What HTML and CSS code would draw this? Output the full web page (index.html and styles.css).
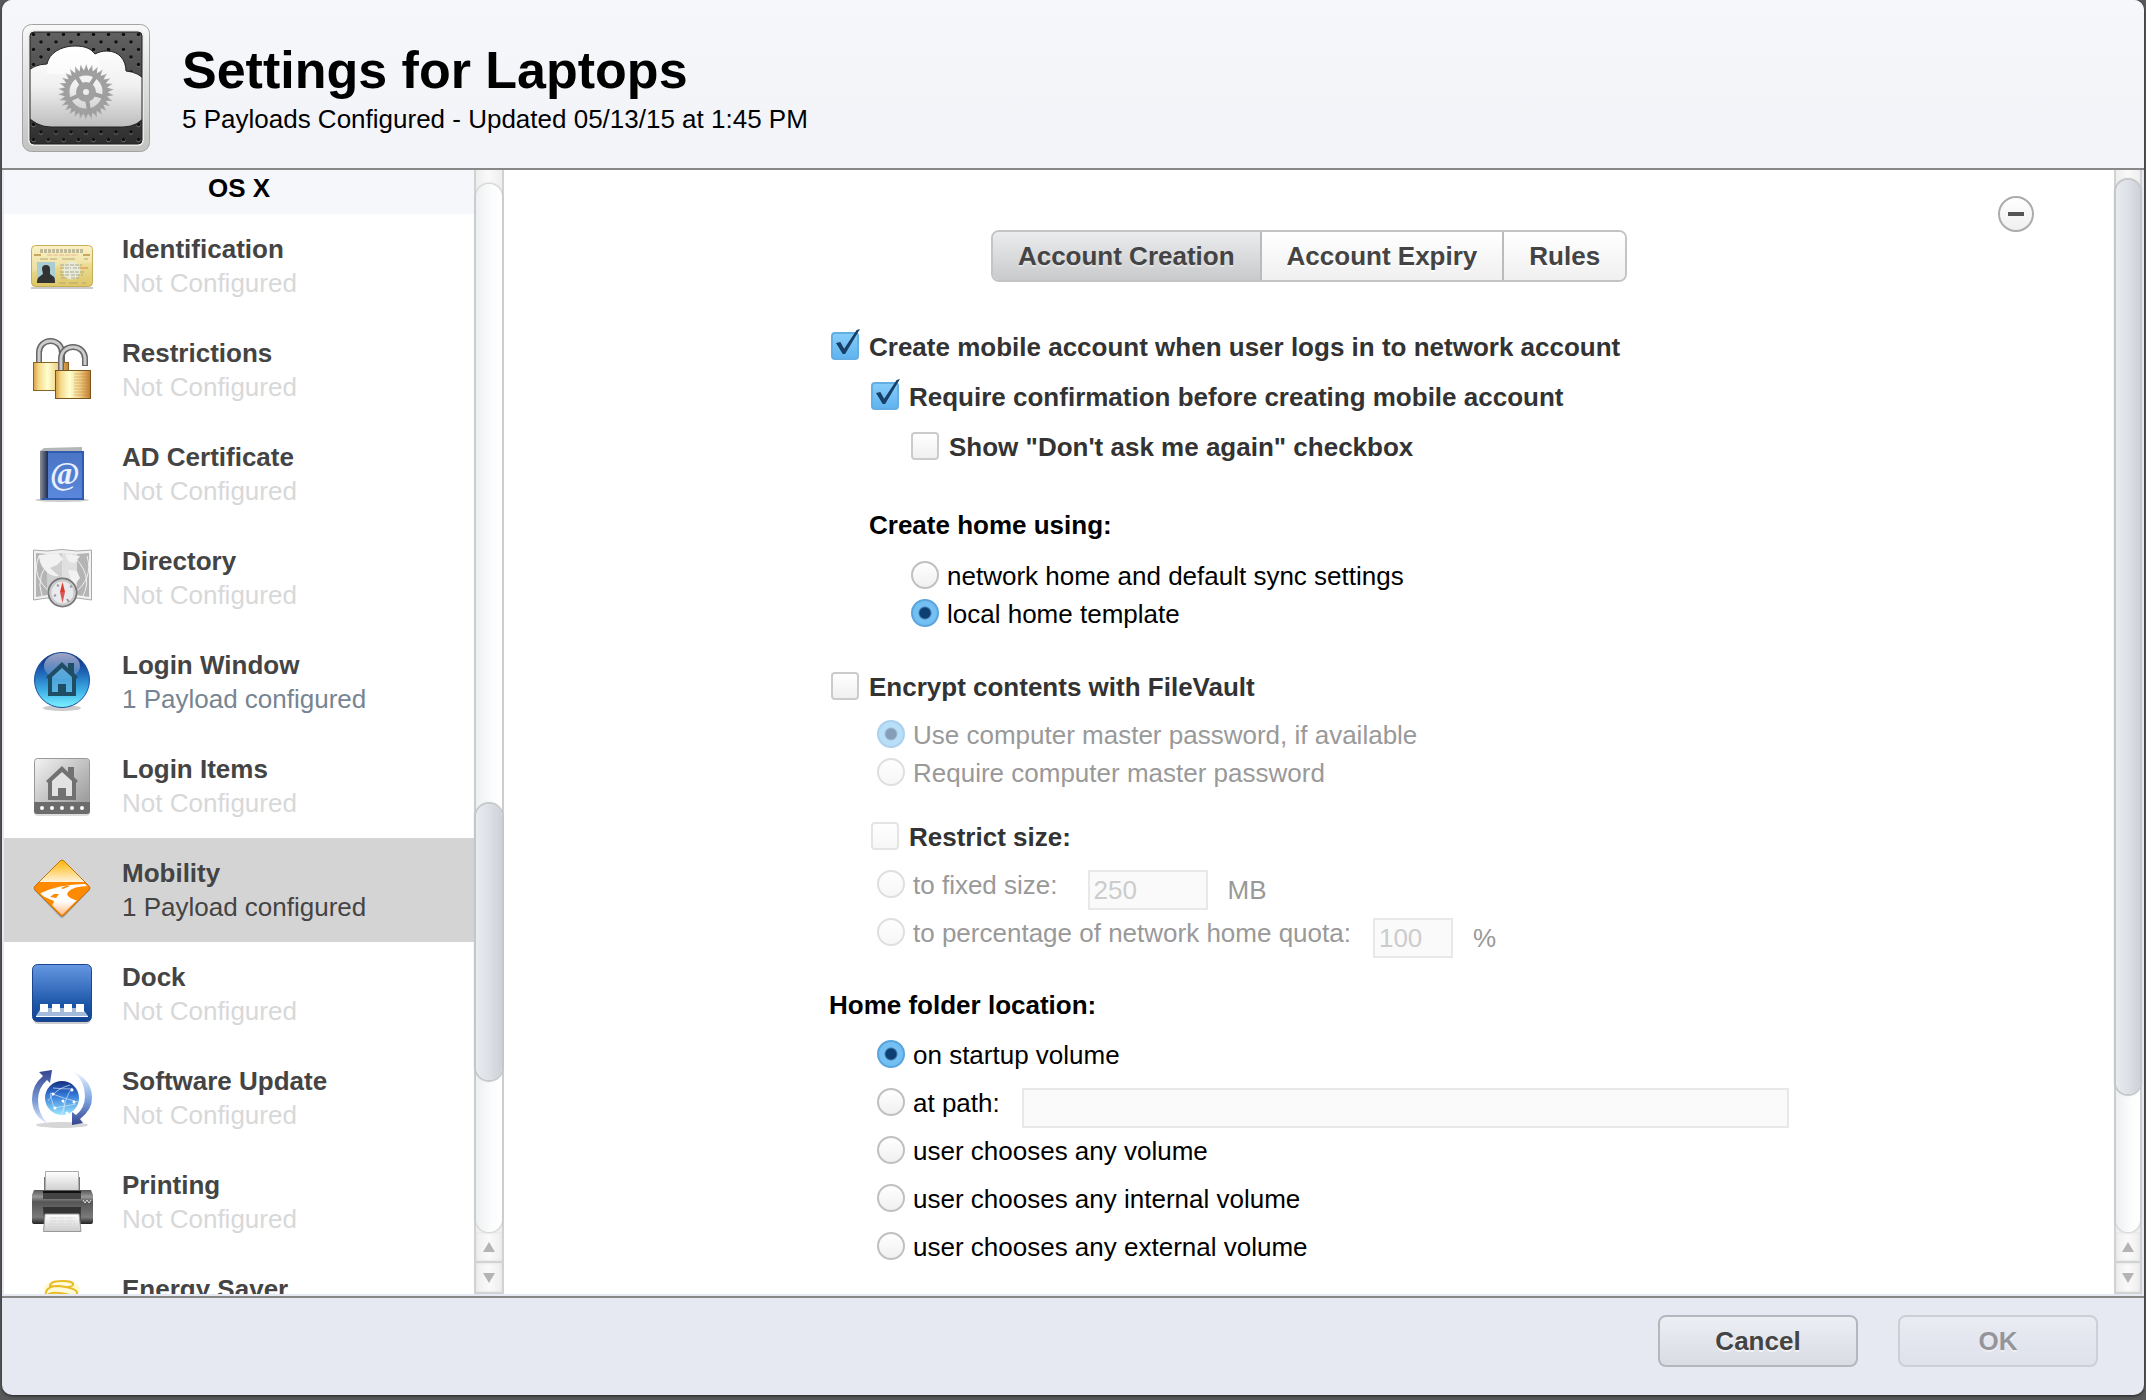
FILE: index.html
```html
<!DOCTYPE html>
<html lang="en">
<head>
    <meta charset="UTF-8">
    <meta name="viewport" content="width=device-width, initial-scale=1.0">
    <title>Settings for Laptops</title>
    <link rel="stylesheet" href="styles.css">
</head>
<body>
    <div class="window">
        <header class="header">
            <svg class="header-icon" viewBox="0 0 128 128" aria-hidden="true">
                <defs>
                    <linearGradient id="frame" x1="0" y1="0" x2="0" y2="1"><stop offset="0" stop-color="#f8f8f8"/><stop offset="1" stop-color="#c2c2c0"/></linearGradient>
                    <linearGradient id="mesh" x1="0" y1="0" x2="0" y2="1"><stop offset="0" stop-color="#616161"/><stop offset="1" stop-color="#2e2e2e"/></linearGradient>
                    <linearGradient id="cloud" x1="0" y1="0" x2="0" y2="1"><stop offset="0" stop-color="#fff"/><stop offset="0.5" stop-color="#f0f0f0"/><stop offset="1" stop-color="#bdbdbd"/></linearGradient>
                    <linearGradient id="cog" x1="0" y1="0" x2="0" y2="1"><stop offset="0" stop-color="#b5b5b5"/><stop offset="1" stop-color="#8f8f8f"/></linearGradient>
                    <pattern id="holes" x="4" y="3" width="15" height="15" patternUnits="userSpaceOnUse">
                        <circle cx="7.5" cy="8.2" r="2" fill="#6a6a6a"/><circle cx="7.5" cy="7.5" r="1.8" fill="#111"/>
                        <circle cx="0" cy="0.7" r="2" fill="#6a6a6a"/><circle cx="0" cy="0" r="1.8" fill="#111"/>
                        <circle cx="15" cy="0.7" r="2" fill="#6a6a6a"/><circle cx="15" cy="0" r="1.8" fill="#111"/>
                        <circle cx="0" cy="15" r="1.8" fill="#111"/><circle cx="15" cy="15" r="1.8" fill="#111"/>
                    </pattern>
                    <clipPath id="inner"><rect x="8" y="8" width="112" height="112" rx="4"/></clipPath>
                    <g id="teeth">
                        <path id="tooth" d="M61 49L64.400 40L67 49z"/>
                        <use href="#tooth" transform="rotate(12 64 68)"/>
                        <use href="#tooth" transform="rotate(24 64 68)"/>
                        <use href="#tooth" transform="rotate(36 64 68)"/>
                        <use href="#tooth" transform="rotate(48 64 68)"/>
                    </g>
                </defs>
                <rect x="0.5" y="0.5" width="127" height="127" rx="9" fill="url(#frame)" stroke="#a3a3a3"/>
                <rect x="6" y="6" width="116" height="116" rx="6" fill="#e9e9e9"/>
                <g clip-path="url(#inner)">
                    <rect x="8" y="8" width="112" height="112" fill="url(#mesh)"/>
                    <rect x="8" y="8" width="112" height="112" fill="url(#holes)"/>
                    <path d="M2 50Q12 40 25 40C27 29 39 22 53 22C64 22 69 25 73 30C77 28 80 27 85 27C97 27 104 36 104 47Q117 48 125 58V90Q116 103 101 103H29Q14 103 3 90z" fill="url(#cloud)" stroke="#222" stroke-width="1"/>
                    <path d="M25 50C25 35 34 24 51 23S77 32 80 50" fill="#fff" opacity="0.6"/>
                    <g fill="url(#cog)">
                        <use href="#teeth"/>
                        <use href="#teeth" transform="rotate(60 64 68)"/>
                        <use href="#teeth" transform="rotate(120 64 68)"/>
                        <use href="#teeth" transform="rotate(180 64 68)"/>
                        <use href="#teeth" transform="rotate(240 64 68)"/>
                        <use href="#teeth" transform="rotate(300 64 68)"/>
                    </g>
                    <circle cx="64" cy="68" r="19" fill="none" stroke="#a0a0a0" stroke-width="5"/>
                    <path d="M64 68L67 87M64 68l18 5M64 68L47 76M64 68L54 52M64 68l10-16" stroke="#9d9d9d" stroke-width="4"/>
                    <circle cx="64" cy="68" r="10" fill="#a0a0a0"/>
                    <circle cx="64" cy="68" r="3" fill="#eee"/>
                </g>
                <rect x="8" y="8" width="112" height="112" rx="4" fill="none" stroke="#222" stroke-width="1"/>
            </svg>
            <div>
                <h1>Settings for Laptops</h1>
                <p>5 Payloads Configured - Updated 05/13/15 at 1:45 PM</p>
            </div>
        </header>

        <div class="body">
            <nav class="sidebar">
                <h2>OS X</h2>

                <a class="item" href="#identification">
                    <svg class="item-icon" viewBox="0 0 64 64" aria-hidden="true">
                        <defs><linearGradient id="card" x1="0" y1="0" x2="0" y2="1"><stop offset="0" stop-color="#faefb8"/><stop offset="1" stop-color="#dcc666"/></linearGradient></defs>
                        <path d="M1 56h62" stroke="#999" stroke-width="2" opacity="0.5"/>
                        <rect x="1.500" y="13.500" width="61" height="41" rx="4" fill="url(#card)" stroke="#c9ae58"/>
                        <path d="M2 40Q30 32 62 31V18Q62 14 58 14H6Q2 14 2 18z" fill="#fff" opacity="0.2"/>
                        <path d="M10 19h44" stroke="#c2bb9a" stroke-width="4" stroke-dasharray="3 1"/>
                        <path d="M4 23h7M53 23h7" stroke="#c8a860" stroke-width="2"/>
                        <path d="M17 23h31" stroke="#e8b48c" stroke-width="1" stroke-dasharray="5 1"/>
                        <path d="M10 27h8M20 27h7M32 27h13M54 27h4M29 51h7M39 51h9M52 51h4" stroke="#b3a673" stroke-width="1"/>
                        <rect x="7" y="30" width="18" height="21" fill="#a9cdd0"/>
                        <path d="M12 37Q12 33 16 33T20 37V42L24 45Q25 46 25 51H7Q7 46 9 45L13 42z" fill="#333"/>
                        <circle cx="41.500" cy="38.500" r="9" fill="#e8eadc"/>
                        <path d="M30 33h22M30 36h11M43 36h7M30 40h24M30 43h9M41 43h12M31 46h6M41 46h8" stroke="#aaa68a" stroke-width="1" stroke-dasharray="4 1"/>
                        <path d="M50 36h8" stroke="#e08058" stroke-width="1"/>
                    </svg>
                    <span class="item-text"><strong>Identification</strong><small>Not Configured</small></span>
                </a>

                <a class="item" href="#restrictions">
                    <svg class="item-icon" viewBox="0 0 64 64" aria-hidden="true">
                        <defs><linearGradient id="brass"><stop offset="0" stop-color="#d99f44"/><stop offset="0.15" stop-color="#f5d98a"/><stop offset="0.4" stop-color="#ffffd0"/><stop offset="0.7" stop-color="#f0cf86"/><stop offset="1" stop-color="#c47d2c"/></linearGradient></defs>
                        <path d="M9 28V17C9 1 32 1 32 17V28" fill="none" stroke="#666" stroke-width="6"/>
                        <path d="M9 28V17C9 1 32 1 32 17V28" fill="none" stroke="#ccc" stroke-width="3"/>
                        <rect x="3.500" y="26.500" width="35" height="28" fill="url(#brass)" stroke="#8a6426"/>
                        <path d="M31 35V23C31 7 55 7 55 23V30" fill="none" stroke="#666" stroke-width="6"/>
                        <path d="M31 35V23C31 7 55 7 55 23V29" fill="none" stroke="#ccc" stroke-width="3"/>
                        <rect x="25.500" y="34.500" width="35" height="28" fill="url(#brass)" stroke="#7a551e"/>
                        <path d="M44 38h16M44 41h16M44 44h16M44 47h16M44 50h16M44 53h16M44 56h16M44 59h16" stroke="#b06f2a" opacity="0.35"/>
                    </svg>
                    <span class="item-text"><strong>Restrictions</strong><small>Not Configured</small></span>
                </a>

                <a class="item" href="#ad-certificate">
                    <svg class="item-icon" viewBox="0 0 64 64" aria-hidden="true">
                        <defs>
                            <linearGradient id="cover" x1="0" y1="0" x2="0" y2="1"><stop offset="0" stop-color="#4a74c4"/><stop offset="1" stop-color="#5b88de"/></linearGradient>
                            <linearGradient id="spine"><stop offset="0" stop-color="#8b8f96"/><stop offset="1" stop-color="#1b2b52"/></linearGradient>
                        </defs>
                        <ellipse cx="32" cy="60" rx="27" ry="2" fill="#aaa" opacity="0.6"/>
                        <path d="M10 11L14 8L52 7V12H10z" fill="#b4b7b8"/>
                        <rect x="10" y="11" width="44" height="49" fill="url(#cover)"/>
                        <rect x="10" y="11" width="8" height="49" fill="url(#spine)"/>
                        <path d="M18 12H53V59H12" fill="none" stroke="#2f5bb0" stroke-width="2"/>
                        <text x="35" y="44" text-anchor="middle" class="at-sign">@</text>
                    </svg>
                    <span class="item-text"><strong>AD Certificate</strong><small>Not Configured</small></span>
                </a>

                <a class="item" href="#directory">
                    <svg class="item-icon" viewBox="0 0 64 64" aria-hidden="true">
                        <path d="M3.500 6L17 7L32 5.500L47 7L61.500 6V56L47 54L32 56L17 54L3.500 56z" fill="#f1f1f1" stroke="#aaa"/>
                        <path d="M6 9L17 10V51L6 53z" fill="#b4b4b4"/>
                        <path d="M17 10L32 9V52L17 51z" fill="#cfcfcf"/>
                        <path d="M32 9L47 10V51L32 52z" fill="#e0e0e0"/>
                        <path d="M47 10L59 9V53L47 51z" fill="#b4b4b4"/>
                        <path d="M9 11L28 9L33 15L27 21L20 24L29 32Q20 33 15 26Q9 20 9 11zM35 10L50 12L45 19L39 18zM38 26L47 27L50 34L43 43z" fill="#f2f2f2"/>
                        <path d="M9 12Q0 32 22 50M57 12Q64 35 43 50M12 52Q4 30 26 10M41 10Q64 30 53 52" fill="none" stroke="#f1f1f1"/>
                        <circle cx="32.500" cy="48.500" r="14" fill="#e9eaee" stroke="#777" stroke-width="2"/>
                        <circle cx="32.500" cy="48.500" r="12" fill="none" stroke="#c9c9c9" stroke-width="2"/>
                        <path d="M30 48l2.500-10L35 48z" fill="#e03a2a"/>
                        <path d="M30 48l2.500 11L35 48z" fill="#d55"/>
                        <path d="M24 52l2-1M40 43l2-1M27 41l2 1M37 55l2 3" stroke="#999" stroke-width="2"/>
                    </svg>
                    <span class="item-text"><strong>Directory</strong><small>Not Configured</small></span>
                </a>

                <a class="item configured" href="#login-window">
                    <svg class="item-icon" viewBox="0 0 64 64" aria-hidden="true">
                        <defs>
                            <linearGradient id="orb" x1="0" y1="0" x2="0" y2="1"><stop offset="0" stop-color="#10206e"/><stop offset="0.35" stop-color="#1d63b5"/><stop offset="0.7" stop-color="#3fb2e8"/><stop offset="1" stop-color="#7df3ff"/></linearGradient>
                            <linearGradient id="gloss" x1="0" y1="0" x2="0" y2="1"><stop offset="0" stop-color="#fff" stop-opacity="0.6"/><stop offset="1" stop-color="#fff" stop-opacity="0.1"/></linearGradient>
                            <path id="house" fill-rule="evenodd" d="M32 14L38 20V15H44V25L48 29L46 31V48H18V31L16 29zM32 20L22 29V44H28V36H36V44H42V29z"/>
                        </defs>
                        <ellipse cx="32" cy="60" rx="19" ry="3" fill="#999" opacity="0.5"/>
                        <circle cx="32" cy="32" r="27.500" fill="url(#orb)" stroke="#1a4fa0"/>
                        <ellipse cx="32" cy="18" rx="18" ry="13" fill="url(#gloss)"/>
                        <path d="M32 19L21 29V45H43V29z" fill="#5fb4e2" opacity="0.7"/>
                        <use href="#house" fill="#1f4d63"/>
                    </svg>
                    <span class="item-text"><strong>Login Window</strong><small>1 Payload configured</small></span>
                </a>

                <a class="item" href="#login-items">
                    <svg class="item-icon" viewBox="0 0 64 64" aria-hidden="true">
                        <defs><linearGradient id="silver" x1="0" y1="0" x2="1" y2="1"><stop offset="0" stop-color="#f4f4f4"/><stop offset="1" stop-color="#8f8f8f"/></linearGradient></defs>
                        <rect x="4" y="8" width="56" height="56" rx="4" fill="#bbb" opacity="0.5"/>
                        <rect x="4.500" y="6.500" width="55" height="55" rx="3" fill="url(#silver)" stroke="#999"/>
                        <path d="M4 50H60V59Q60 62 57 62H7Q4 62 4 59z" fill="#6c6c6c"/>
                        <path d="M12 56h41" stroke="#fff" stroke-width="4" stroke-linecap="round" stroke-dasharray="0 10"/>
                        <path d="M32 19L21 29V45H43V29z" fill="#e2e2e2"/>
                        <use href="#house" fill="#717171"/>
                    </svg>
                    <span class="item-text"><strong>Login Items</strong><small>Not Configured</small></span>
                </a>

                <a class="item configured selected" href="#mobility">
                    <svg class="item-icon" viewBox="0 0 64 64" aria-hidden="true">
                        <defs>
                            <linearGradient id="sky" x1="0" y1="0" x2="0" y2="1"><stop offset="0" stop-color="#ffb400"/><stop offset="0.39" stop-color="#fff3dd"/><stop offset="0.4" stop-color="#ff8a00"/><stop offset="1" stop-color="#ff8a00"/></linearGradient>
                            <linearGradient id="road" x1="0" y1="0" x2="0" y2="1"><stop offset="0.5" stop-color="#fff"/><stop offset="1" stop-color="#ffb070"/></linearGradient>
                            <clipPath id="diamond"><path d="M32 5L59 32L32 59L5 32z"/></clipPath>
                        </defs>
                        <path d="M32 8L60 34L34 61Q32 63 30 61L4 34z" fill="#777" opacity="0.5"/>
                        <path d="M34 5L59 30Q61 32 59 34L34 59Q32 61 30 59L5 34Q3 32 5 30L30 5Q32 3 34 5z" fill="url(#sky)" stroke="#bd7214"/>
                        <g clip-path="url(#diamond)">
                            <path d="M60 28Q30 27 9 38L24 46L21 50L30 62H40L50 45Q34 42 38 36Q43 30 60 30z" fill="url(#road)"/>
                            <path d="M33 33L40 30L37 29.500L31 32zM24 38L29 38L26 42L20 41zM12 40L24 45L22 50z" fill="#ff8a00"/>
                        </g>
                    </svg>
                    <span class="item-text"><strong>Mobility</strong><small>1 Payload configured</small></span>
                </a>

                <a class="item" href="#dock">
                    <svg class="item-icon" viewBox="0 0 64 64" aria-hidden="true">
                        <defs><linearGradient id="dock" x1="0" y1="0" x2="0" y2="1"><stop offset="0" stop-color="#6698e2"/><stop offset="0.7" stop-color="#1c56a8"/><stop offset="1" stop-color="#134391"/></linearGradient></defs>
                        <rect x="3" y="8" width="58" height="56" rx="5" fill="#999" opacity="0.5"/>
                        <rect x="2.500" y="4.500" width="59" height="57" rx="5" fill="url(#dock)" stroke="#1c4590"/>
                        <path d="M11 48H52L58 56H6z" fill="#a5bbdc"/>
                        <path d="M6 56.500H58" stroke="#fff"/>
                        <path d="M10 44h8v8h-8zM22 44h8v8h-8zM34 44h8v8h-8zM46 44h8v8h-8z" fill="#fff"/>
                    </svg>
                    <span class="item-text"><strong>Dock</strong><small>Not Configured</small></span>
                </a>

                <a class="item" href="#software-update">
                    <svg class="item-icon" viewBox="0 0 64 64" aria-hidden="true">
                        <defs>
                            <linearGradient id="globe" x1="0" y1="0" x2="0" y2="1"><stop offset="0" stop-color="#16307f"/><stop offset="0.4" stop-color="#3276d6"/><stop offset="1" stop-color="#9be9ff"/></linearGradient>
                            <linearGradient id="arrow-up" x1="0" y1="0" x2="0" y2="1"><stop offset="0" stop-color="#34448f"/><stop offset="0.6" stop-color="#7f9fd8"/><stop offset="1" stop-color="#e4eefb"/></linearGradient>
                            <linearGradient id="arrow-down" x1="0" y1="1" x2="0" y2="0"><stop offset="0" stop-color="#34448f"/><stop offset="0.5" stop-color="#7fa8e4"/><stop offset="1" stop-color="#f0f6fd"/></linearGradient>
                        </defs>
                        <ellipse cx="32" cy="61" rx="26" ry="3" fill="#bbb" opacity="0.6"/>
                        <path d="M9 8L22 6L20 19L17 16Q8 24 8 36Q8 50 18 60Q2 52 2 35Q2 21 13 12z" fill="url(#arrow-up)"/>
                        <path d="M53 59L42 61V48L46 51Q55 44 55 32Q55 18 44 8Q62 16 62 34Q62 46 50 55z" fill="url(#arrow-down)"/>
                        <circle cx="32" cy="34" r="17" fill="url(#globe)"/>
                        <path d="M18 37Q25 25 40 21M23 24Q32 25 43 25M20 29Q35 35 48 38M32 50Q37 40 32 36M42 24Q36 32 32 50M20 30L24 44L46 40" fill="none" stroke="#cfe6fa" stroke-width="1" opacity="0.7"/>
                        <path d="M23 30h0M33 37h0M42 26h0M44 38h0M25 44h0M37 49h0" stroke="#fff" stroke-width="3" stroke-linecap="round"/>
                    </svg>
                    <span class="item-text"><strong>Software Update</strong><small>Not Configured</small></span>
                </a>

                <a class="item" href="#printing">
                    <svg class="item-icon" viewBox="0 0 64 64" aria-hidden="true">
                        <defs>
                            <linearGradient id="printer" x1="0" y1="0" x2="0" y2="1"><stop offset="0" stop-color="#555"/><stop offset="0.2" stop-color="#999"/><stop offset="0.35" stop-color="#555"/><stop offset="0.8" stop-color="#7a7a7a"/><stop offset="1" stop-color="#222"/></linearGradient>
                            <linearGradient id="paper" x1="0" y1="0" x2="0" y2="1"><stop offset="0" stop-color="#fff"/><stop offset="1" stop-color="#ccc"/></linearGradient>
                        </defs>
                        <path d="M14 9H50V25H14z" fill="#777"/>
                        <path d="M15.500 3.500H48.500V24H15.500z" fill="url(#paper)" stroke="#aaa"/>
                        <path d="M4 22H61L63 27V54Q63 56 61 56H4Q2 56 2 54V27z" fill="url(#printer)"/>
                        <path d="M13 24H51V31H13z" fill="#444"/>
                        <path d="M13 24H51" stroke="#111" stroke-width="2"/>
                        <path d="M53 32l2 3 2-3M57 32l2 3 2-3" fill="none" stroke="#ddd"/>
                        <path d="M13 39H51L50 64H15z" fill="#333"/>
                        <path d="M15 46H49L51 63.500H13.500z" fill="url(#paper)" stroke="#999"/>
                        <path d="M20 50h25M20 53h25M19 56h27M19 59h27" stroke="#d5d5d5" stroke-dasharray="7 1"/>
                    </svg>
                    <span class="item-text"><strong>Printing</strong><small>Not Configured</small></span>
                </a>

                <a class="item" href="#energy-saver">
                    <svg class="item-icon" viewBox="0 0 64 64" aria-hidden="true">
                        <ellipse cx="32" cy="17" rx="18" ry="9" fill="#fff3a0" opacity="0.5"/>
                        <g fill="#fffbd8" stroke="#e8bb27" stroke-width="2">
                            <path d="M20 14Q20 9 32 9Q44 9 43 13Q42 16 20 14z"/>
                            <path d="M16 20Q18 14 28 14Q47 16 47 21Q48 26 40 23Q20 18 17 24Q15 23 16 20z"/>
                            <path d="M16 28Q18 22 30 23Q47 25 47 30V36H17z"/>
                        </g>
                    </svg>
                    <span class="item-text"><strong>Energy Saver</strong><small>Not Configured</small></span>
                </a>
            </nav>

            <div class="scrollbar scrollbar-sidebar">
                <div class="track"><div class="thumb"></div></div>
                <button class="scroll-btn" aria-label="Scroll up"><svg viewBox="0 0 12 10"><path d="M6 0L12 10H0z"/></svg></button>
                <button class="scroll-btn" aria-label="Scroll down"><svg viewBox="0 0 12 10"><path d="M0 0H12L6 10z"/></svg></button>
            </div>

            <main class="pane">
                <div class="pane-top">
                    <div class="tabs">
                        <button class="tab active">Account Creation</button>
                        <button class="tab">Account Expiry</button>
                        <button class="tab">Rules</button>
                    </div>
                    <button class="remove-btn" aria-label="Remove payload"></button>
                </div>

                <form class="settings">
                    <div class="group">
                        <label class="check"><input type="checkbox" checked><span>Create mobile account when user logs in to network account</span></label>
                        <label class="check indent-1"><input type="checkbox" checked><span>Require confirmation before creating mobile account</span></label>
                        <label class="check indent-2"><input type="checkbox"><span>Show "Don't ask me again" checkbox</span></label>
                    </div>

                    <div class="group home-using">
                        <h3 class="indent-1">Create home using:</h3>
                        <div class="radios tight indent-2">
                            <label class="radio"><input type="radio" name="home"><span>network home and default sync settings</span></label>
                            <label class="radio"><input type="radio" name="home" checked><span>local home template</span></label>
                        </div>
                    </div>

                    <div class="group filevault">
                        <label class="check"><input type="checkbox"><span>Encrypt contents with FileVault</span></label>
                        <div class="radios tight nested">
                            <label class="radio"><input type="radio" name="master" checked disabled><span>Use computer master password, if available</span></label>
                            <label class="radio"><input type="radio" name="master" disabled><span>Require computer master password</span></label>
                        </div>
                    </div>

                    <div class="group restrict">
                        <label class="check indent-1"><input type="checkbox" disabled><span>Restrict size:</span></label>
                        <div class="radios nested">
                            <div class="line">
                                <label class="radio"><input type="radio" name="size" disabled><span>to fixed size:</span></label>
                                <input class="field field-size" type="text" value="250" aria-label="Fixed size in MB" disabled>
                                <span class="unit">MB</span>
                            </div>
                            <div class="line">
                                <label class="radio"><input type="radio" name="size" disabled><span>to percentage of network home quota:</span></label>
                                <input class="field field-percent" type="text" value="100" aria-label="Percentage of quota" disabled>
                                <span class="unit">%</span>
                            </div>
                        </div>
                    </div>

                    <div class="group location">
                        <h3>Home folder location:</h3>
                        <div class="radios nested">
                            <div class="line"><label class="radio"><input type="radio" name="location" checked><span>on startup volume</span></label></div>
                            <div class="line">
                                <label class="radio"><input type="radio" name="location"><span>at path:</span></label>
                                <input class="field field-path" type="text" aria-label="Path" disabled>
                            </div>
                            <div class="line"><label class="radio"><input type="radio" name="location"><span>user chooses any volume</span></label></div>
                            <div class="line"><label class="radio"><input type="radio" name="location"><span>user chooses any internal volume</span></label></div>
                            <div class="line"><label class="radio"><input type="radio" name="location"><span>user chooses any external volume</span></label></div>
                        </div>
                    </div>
                </form>
            </main>

            <div class="scrollbar scrollbar-pane">
                <div class="track"><div class="thumb"></div></div>
                <button class="scroll-btn" aria-label="Scroll up"><svg viewBox="0 0 12 10"><path d="M6 0L12 10H0z"/></svg></button>
                <button class="scroll-btn" aria-label="Scroll down"><svg viewBox="0 0 12 10"><path d="M0 0H12L6 10z"/></svg></button>
            </div>
        </div>

        <footer class="footer">
            <button class="btn">Cancel</button>
            <button class="btn" disabled>OK</button>
        </footer>
    </div>
</body>
</html>
```
FILE: styles.css
```css
* {
    box-sizing: border-box;
}

body {
    margin: 0;
    height: 100vh;
    padding: 0 2px 5px;
    background-color: #58595b;
    font-family: "Liberation Sans", Arial, sans-serif;
    font-size: 26px;
    line-height: 34px;
    color: #000;
}

h1, h2, h3, p {
    margin: 0;
}

button, input {
    font: inherit;
    margin: 0;
}

.window {
    display: flex;
    flex-direction: column;
    height: 100%;
    border-radius: 10px;
    background-color: #e6e9f2;
    box-shadow: 0 1px 3px #222;
    overflow: hidden;
}

.header {
    display: flex;
    align-items: center;
    gap: 32px;
    padding: 24px 20px 16px;
    background: linear-gradient(#f5f7fa, #f1f3f8);
    border-bottom: 2px solid #888;
}

.header-icon {
    width: 128px;
    height: 128px;
    flex: none;
}

.header h1 {
    font-size: 52px;
    line-height: 60px;
}

.header p {
    margin-top: 2px;
}

.body {
    flex: 1;
    min-height: 0;
    display: flex;
    padding: 0 2px 2px;
}

/* sidebar */

.sidebar {
    width: 470px;
    flex: none;
    overflow: hidden;
    background-color: #fff;
}

.sidebar h2 {
    height: 44px;
    font-size: 26px;
    line-height: 36px;
    text-align: center;
    background-color: #f6f7fa;
}

.item {
    display: flex;
    align-items: center;
    gap: 28px;
    height: 104px;
    padding: 0 26px;
    color: #444;
    text-decoration: none;
}

.item-icon {
    width: 64px;
    height: 64px;
    flex: none;
    margin-bottom: 4px;
}

.item-text strong, .item-text small {
    display: block;
    font-size: 26px;
}

.item-text small {
    color: #d8d8d8;
}

.item.configured small {
    color: #778592;
}

.item.selected {
    background-color: #d4d4d4;
}

.item.selected small {
    color: #444;
}

.at-sign {
    font-family: "Liberation Serif", serif;
    font-size: 32px;
    font-weight: bold;
    fill: #e8f0ff;
}

/* scrollbars */

.scrollbar {
    display: flex;
    flex-direction: column;
    width: 28px;
    flex: none;
    border: 2px solid #d0d2d3;
    border-top: none;
    border-bottom: none;
    background: linear-gradient(90deg, #eee, #fafafa 50%, #eee);
}

.track {
    flex: 1;
    display: grid;
    margin-top: 14px;
    border-radius: 14px;
    background: linear-gradient(90deg, #edf0f2, #fbfcfc 60%, #fff);
    box-shadow: 0 0 2px 1px #c8c8c8;
}

.thumb {
    grid-row: 2;
    border-radius: 14px;
    background: linear-gradient(90deg, #e8ecf0, #dde1e6 50%, #cdd1d8);
    box-shadow: 0 0 1px 2px #c4c6c8;
}

.scrollbar-sidebar {
    width: 30px;
}

.scrollbar-sidebar .track {
    grid-template-rows: 620fr 276fr 152fr;
}

.scrollbar-pane .track {
    margin-top: 10px;
    grid-template-rows: 0fr 914fr 138fr;
}

.scroll-btn {
    display: flex;
    align-items: center;
    justify-content: center;
    height: 31px;
    padding: 0;
    border: none;
    border-bottom: 2px solid #d0d2d3;
    background: none;
    box-shadow: inset 0 0 3px #ddd;
}

.scroll-btn svg {
    width: 12px;
    height: 10px;
    fill: #b4b4b4;
}

/* settings pane */

.pane {
    flex: 1;
    min-width: 0;
    overflow: hidden;
    background-color: #fff;
}

.pane-top {
    display: grid;
    grid-template-columns: 1fr auto 1fr;
    padding: 26px 80px 0;
}

.tabs {
    grid-column: 2;
    display: flex;
    height: 52px;
    margin-top: 34px;
    border: 2px solid #c4c4c4;
    border-radius: 8px;
    overflow: hidden;
}

.tab {
    padding: 0 25px;
    border: none;
    border-left: 2px solid #bbb;
    background: linear-gradient(#fff, #f0f0f0);
    color: #444;
    font-weight: bold;
    text-shadow: 0 2px 0 #fff;
}

.tab:first-child {
    border-left: none;
}

.tab.active {
    background: linear-gradient(#ebecee, #c9cacc);
    text-shadow: 0 2px 0 #e4e4e4;
}

.remove-btn {
    display: flex;
    align-items: center;
    justify-content: center;
    width: 36px;
    height: 36px;
    padding: 0;
    justify-self: end;
    border: 2px solid #acacac;
    border-radius: 50%;
    background: linear-gradient(#fff, #f0f0f0);
}

.remove-btn::before {
    content: "";
    width: 16px;
    height: 4px;
    background-color: #555;
}

.settings {
    max-width: 960px;
    margin: 39px auto 0;
}

.settings h3 {
    font-size: 26px;
    line-height: 50px;
}

.settings .indent-1 {
    padding-left: 40px;
}

.settings .indent-2 {
    padding-left: 80px;
}

.home-using, .filevault {
    margin-top: 29px;
}

.restrict {
    margin-top: 20px;
}

.location {
    margin-top: 14px;
}

.check {
    display: flex;
    align-items: center;
    gap: 10px;
    height: 50px;
    color: #333;
    font-weight: bold;
}

.check span, .radio span {
    padding-top: 2px;
}

.check input, .radio input {
    appearance: none;
    flex: none;
    width: 28px;
    height: 28px;
    margin-left: 2px;
    border: 2px solid #cbcbcb;
    border-radius: 4px;
    background: linear-gradient(#fff, #f0f0f0);
}

.check input:checked {
    position: relative;
    border-color: #63aee2;
    background: linear-gradient(#86ccf8, #60b4ef);
}

.check input:checked::after {
    content: "";
    position: absolute;
    left: 3px;
    top: -5px;
    width: 24px;
    height: 26px;
    background-color: #173f68;
    clip-path: polygon(0 54%, 18% 50%, 34% 76%, 86% 4%, 100% 0, 38% 96%, 28% 96%);
}

.radio {
    display: flex;
    align-items: center;
    gap: 8px;
    height: 28px;
}

.radio input {
    margin-left: 0;
    border-color: #c0c0c0;
    border-radius: 50%;
}

.radio input:checked {
    border-color: #5aa5dc;
    background: radial-gradient(circle, #0e3f72 5px, #76c1f3 7px, #6cbcf3);
}

.check input:disabled, .radio input:disabled {
    opacity: 0.5;
}

.radio input:disabled + span {
    color: #999;
}

.radios.nested {
    padding-left: 48px;
}

.radios.tight.indent-2 {
    padding-left: 82px;
}

.radios.tight .radio {
    height: 38px;
}

.home-using .radios {
    padding-top: 6px;
}

.filevault .radios {
    padding-top: 4px;
}

.restrict .radios {
    padding-top: 9px;
}

.location .radios {
    padding-top: 10px;
}

.line {
    display: flex;
    align-items: flex-start;
    height: 48px;
}

.field {
    height: 40px;
    padding: 0 4px;
    border: 2px solid #e8e8e8;
    background-color: #fafafa;
    color: #ccc;
}

.field-size {
    width: 120px;
    margin-left: 30px;
}

.field-percent {
    width: 80px;
    margin-left: 22px;
}

.field-path {
    flex: 1;
    margin-left: 22px;
}

.unit {
    margin-left: 20px;
    line-height: 40px;
    color: #999;
}

/* bottom bar */

.footer {
    display: flex;
    justify-content: flex-end;
    gap: 40px;
    height: 99px;
    flex: none;
    padding: 17px 46px 0;
    border-top: 2px solid #888;
}

.btn {
    width: 200px;
    height: 52px;
    border: 2px solid #b4b7bd;
    border-radius: 8px;
    background: linear-gradient(#edeff4, #e2e5ec 50%, #d9dce4);
    color: #444;
    font-weight: bold;
    text-shadow: 0 2px 0 #f4f4f8;
}

.btn:disabled {
    opacity: 0.5;
}
```
